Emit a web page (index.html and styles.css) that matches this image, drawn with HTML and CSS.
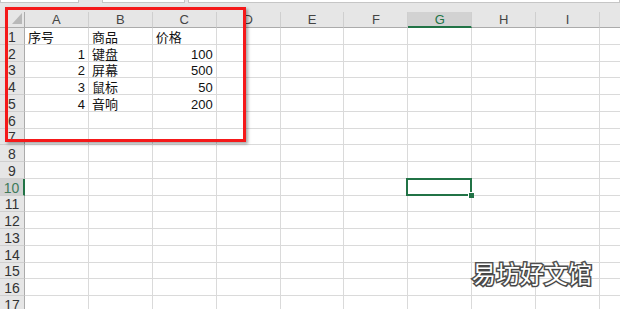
FILE: index.html
```html
<!DOCTYPE html>
<html lang="zh-CN">
<head>
    <meta charset="UTF-8">
    <title>Sheet1</title>
    <link rel="stylesheet" href="styles.css">
</head>
<body>
    <div class="formula-bar">
        <div class="fx-box name-box"></div>
        <div class="fx-box fx-mid"></div>
        <div class="fx-box fx-input"></div>
    </div>

    <div class="sheet" id="sheet"></div>

    <div class="mark-box"></div>
    <div class="watermark">易坊好文馆</div>

    <script>
        // J only peeks in at the right edge, so its letter stays off
        const cols = ['A', 'B', 'C', 'D', 'E', 'F', 'G', 'H', 'I', ''];
        const data = {
            1: ['序号', '商品', '价格'],
            2: [1, '键盘', 100],
            3: [2, '屏幕', 500],
            4: [3, '鼠标', 50],
            5: [4, '音响', 200]
        };
        const activeCol = 'G';
        const activeRow = 10;

        const sheet = document.getElementById('sheet');

        function addCell(cls, text) {
            const el = document.createElement('div');
            el.className = cls;
            if (text !== undefined) el.textContent = text;
            sheet.appendChild(el);
            return el;
        }

        // corner + column headers
        const corner = addCell('corner');
        corner.innerHTML = '<svg width="10" height="11" viewBox="0 0 10 11"><polygon points="10,0 10,11 0,11" fill="#b8b8b8"/></svg>';
        cols.forEach(c => addCell('col-head' + (c === activeCol ? ' hl' : ''), c));

        // rows
        for (let r = 1; r <= 17; r++) {
            addCell('row-head' + (r === activeRow ? ' hl' : ''), r);
            cols.forEach((c, i) => {
                const row = data[r] || [];
                const val = row[i];
                let cls = 'cell';
                if (typeof val === 'number') cls += ' num';
                if (c === activeCol && r === activeRow) cls += ' active';
                addCell(cls, val);
            });
        }
    </script>
</body>
</html>
```

FILE: styles.css
```css
body {
    margin: 0;
    width: 620px;
    height: 309px;
    overflow: hidden;
    position: relative;
    background: #e6e6e6;
    font-family: "Liberation Sans", "Noto Sans CJK SC", sans-serif;
}
.formula-bar {
    display: flex;
    height: 3px;
    background: #e6e6e6;
}
.fx-box {
    background: #fff;
    border: 1px solid #c6c6c6;
    border-top: none;
    box-sizing: border-box;
}
.name-box {
    width: 79px;
}
.fx-mid {
    width: 83px;
    margin-left: 23px;
}
.fx-input {
    flex: 1;
    margin-left: 3px;
}
.sheet {
    margin-top: 9px;
    display: grid;
    grid-template-columns: 25px repeat(10, 63.9px);
    grid-template-rows: 16px repeat(17, 16.75px);
    background: #fff;
    font-size: 13px;
    line-height: 12px;
}
.sheet > div {
    box-sizing: border-box;
    display: flex;
    align-items: flex-end;
    white-space: nowrap;
}
.corner {
    background: #e6e6e6;
    border-right: 1px solid #ababab;
    border-bottom: 1px solid #ababab;
    justify-content: flex-end;
    padding: 2px 2px 3px 0;
}
.corner svg {
    display: block;
}
.col-head {
    background: #e6e6e6;
    color: #444;
    justify-content: center;
    border-right: 1px solid #cfcfcf;
    border-bottom: 1px solid #ababab;
    padding-bottom: 1px;
}
.row-head {
    background: #e6e6e6;
    color: #333;
    justify-content: center;
    border-right: 1px solid #ababab;
    border-bottom: 1px solid #cfcfcf;
    font-size: 14px;
    padding-bottom: 1px;
}
.col-head.hl {
    background: #d2d2d2;
    color: #217346;
    border-bottom: 2px solid #217346;
    padding-bottom: 0;
}
.row-head.hl {
    background: #d2d2d2;
    color: #3f7a5a;
    border-right: 2px solid #217346;
}
.cell {
    color: #111;
    border-right: 1px solid #dadada;
    border-bottom: 1px solid #dadada;
    padding: 0 3px 0 3px;
}
.cell.num {
    justify-content: flex-end;
}
.cell.active {
    position: relative;
}
.cell.active::before {
    content: "";
    position: absolute;
    top: -1px;
    left: -2px;
    right: -1px;
    bottom: -1px;
    border: 2px solid #217346;
}
.cell.active::after {
    content: "";
    position: absolute;
    right: -3px;
    bottom: -3px;
    width: 5px;
    height: 5px;
    background: #217346;
    border: 1px solid #fff;
    border-right: none;
    border-bottom: none;
}
.mark-box {
    position: absolute;
    left: 5px;
    top: 7px;
    width: 241px;
    height: 135px;
    box-sizing: border-box;
    border: 3px solid #f5191a;
    box-shadow: 2px 2px 3px rgba(0, 0, 0, 0.35);
}
.watermark {
    position: absolute;
    left: 472px;
    top: 261px;
    font-family: "Noto Sans CJK SC", sans-serif;
    font-size: 24px;
    line-height: 1;
    color: #fff;
    -webkit-text-stroke: 3px #505050;
    paint-order: stroke fill;
    text-shadow: 1px 1px 2px rgba(0, 0, 0, 0.25);
}
```
